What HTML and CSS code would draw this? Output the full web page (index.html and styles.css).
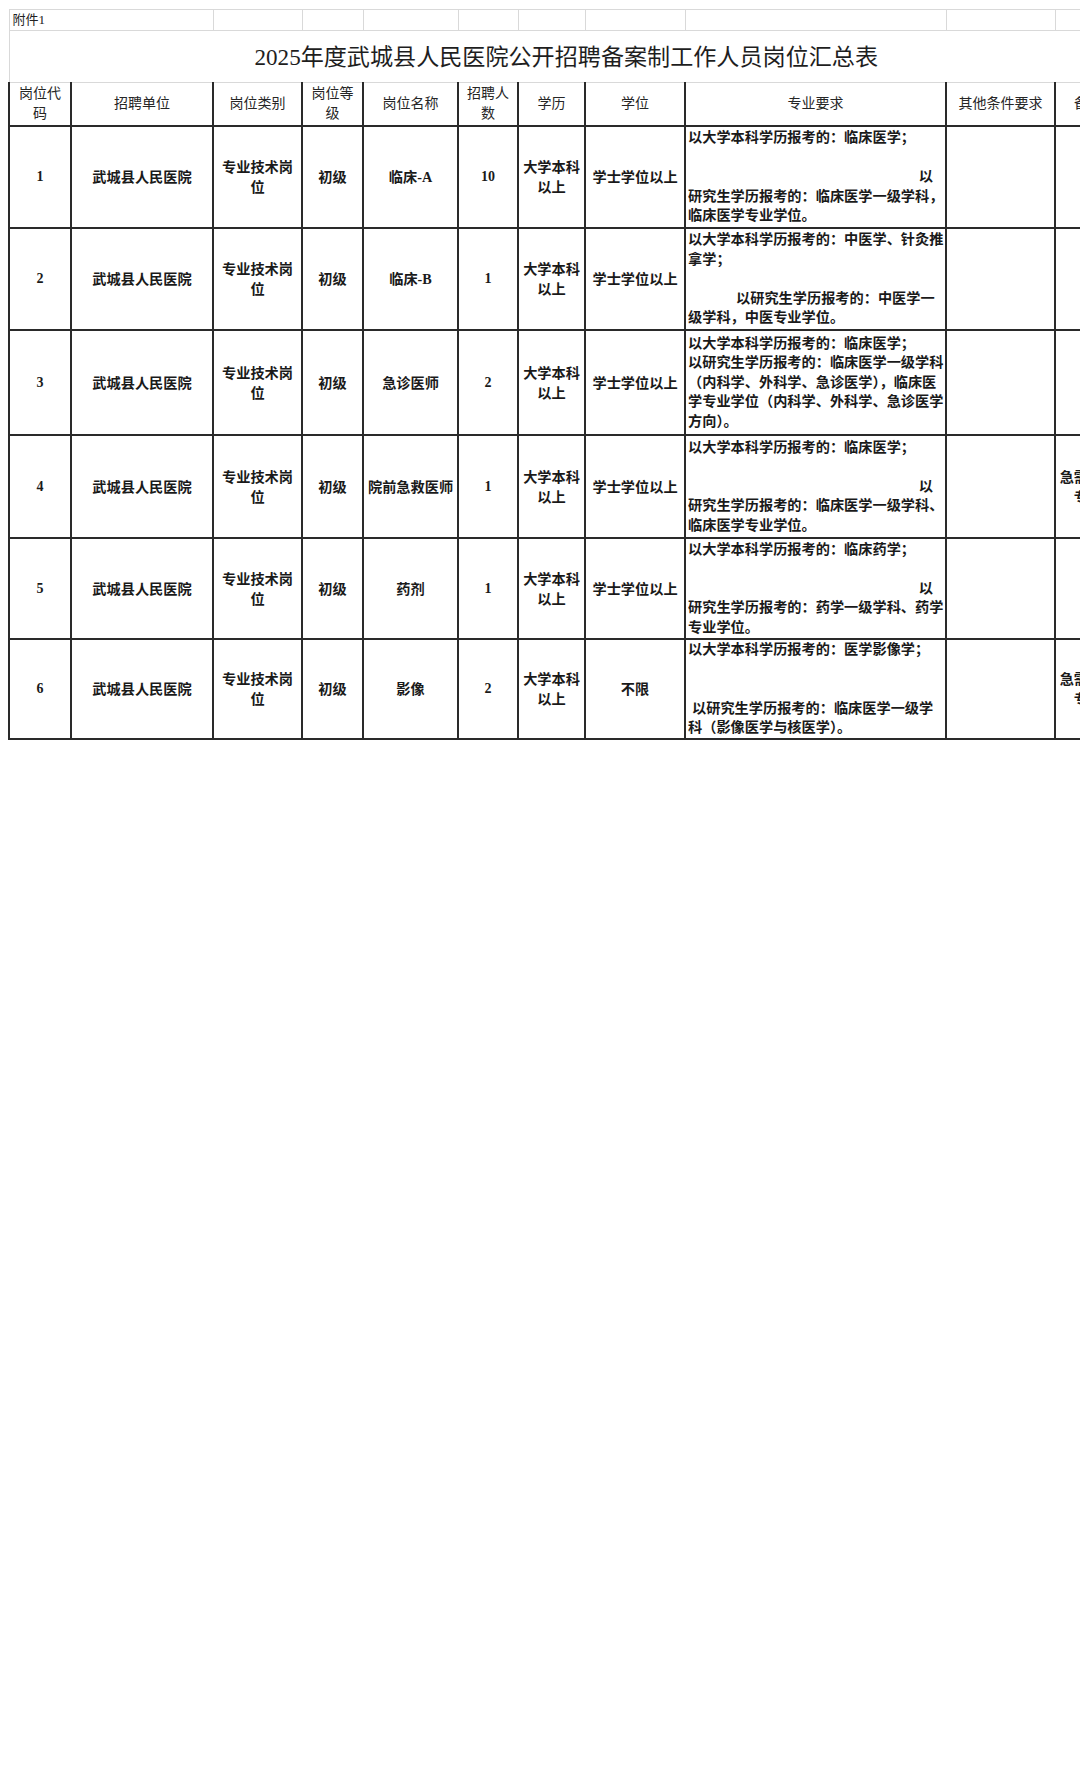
FILE: index.html
```html
<!DOCTYPE html>
<html lang="zh-CN">
<head>
<meta charset="utf-8">
<title>2025年度武城县人民医院公开招聘备案制工作人员岗位汇总表</title>
<link rel="stylesheet" href="styles.css">
</head>
<body>
<table class="sheet">
  <colgroup>
    <col class="c1"><col class="c2"><col class="c3"><col class="c4"><col class="c5"><col class="c6"><col class="c7"><col class="c8"><col class="c9"><col class="c10"><col class="c11">
  </colgroup>
  <tr class="r-note">
    <td colspan="2" class="note">附件1</td>
    <td></td><td></td><td></td><td></td><td></td><td></td><td></td><td></td><td></td>
  </tr>
  <tr class="r-title">
    <td colspan="11" class="title">2025年度武城县人民医院公开招聘备案制工作人员岗位汇总表</td>
  </tr>
  <tr class="r-head">
    <th>岗位代<br>码</th>
    <th>招聘单位</th>
    <th>岗位类别</th>
    <th>岗位等<br>级</th>
    <th>岗位名称</th>
    <th>招聘人<br>数</th>
    <th>学历</th>
    <th>学位</th>
    <th>专业要求</th>
    <th>其他条件要求</th>
    <th>备注</th>
  </tr>
  <tr class="r1">
    <td class="num">1</td>
    <td>武城县人民医院</td>
    <td>专业技术岗<br>位</td>
    <td>初级</td>
    <td>临床-A</td>
    <td class="num">10</td>
    <td>大学本科<br>以上</td>
    <td>学士学位以上</td>
    <td class="req"><div>以大学本科学历报考的：临床医学；</div><div>&nbsp;</div><div class="right">以</div><div>研究生学历报考的：临床医学一级学科，</div><div>临床医学专业学位。</div></td>
    <td></td>
    <td></td>
  </tr>
  <tr class="r2">
    <td class="num">2</td>
    <td>武城县人民医院</td>
    <td>专业技术岗<br>位</td>
    <td>初级</td>
    <td>临床-B</td>
    <td class="num">1</td>
    <td>大学本科<br>以上</td>
    <td>学士学位以上</td>
    <td class="req"><div>以大学本科学历报考的：中医学、针灸推</div><div>拿学；</div><div>&nbsp;</div><div class="indent">以研究生学历报考的：中医学一</div><div>级学科，中医专业学位。</div></td>
    <td></td>
    <td></td>
  </tr>
  <tr class="r3">
    <td class="num">3</td>
    <td>武城县人民医院</td>
    <td>专业技术岗<br>位</td>
    <td>初级</td>
    <td>急诊医师</td>
    <td class="num">2</td>
    <td>大学本科<br>以上</td>
    <td>学士学位以上</td>
    <td class="req"><div>以大学本科学历报考的：临床医学；</div><div>以研究生学历报考的：临床医学一级学科</div><div>（内科学、外科学、急诊医学），临床医</div><div>学专业学位（内科学、外科学、急诊医学</div><div>方向）。</div></td>
    <td></td>
    <td></td>
  </tr>
  <tr class="r4">
    <td class="num">4</td>
    <td>武城县人民医院</td>
    <td>专业技术岗<br>位</td>
    <td>初级</td>
    <td>院前急救医师</td>
    <td class="num">1</td>
    <td>大学本科<br>以上</td>
    <td>学士学位以上</td>
    <td class="req"><div>以大学本科学历报考的：临床医学；</div><div>&nbsp;</div><div class="right">以</div><div>研究生学历报考的：临床医学一级学科、</div><div>临床医学专业学位。</div></td>
    <td></td>
    <td>急需紧缺<br>专业</td>
  </tr>
  <tr class="r5">
    <td class="num">5</td>
    <td>武城县人民医院</td>
    <td>专业技术岗<br>位</td>
    <td>初级</td>
    <td>药剂</td>
    <td class="num">1</td>
    <td>大学本科<br>以上</td>
    <td>学士学位以上</td>
    <td class="req"><div>以大学本科学历报考的：临床药学；</div><div>&nbsp;</div><div class="right">以</div><div>研究生学历报考的：药学一级学科、药学</div><div>专业学位。</div></td>
    <td></td>
    <td></td>
  </tr>
  <tr class="r6">
    <td class="num">6</td>
    <td>武城县人民医院</td>
    <td>专业技术岗<br>位</td>
    <td>初级</td>
    <td>影像</td>
    <td class="num">2</td>
    <td>大学本科<br>以上</td>
    <td>不限</td>
    <td class="req"><div>以大学本科学历报考的：医学影像学；</div><div>&nbsp;</div><div>&nbsp;</div><div class="lead">以研究生学历报考的：临床医学一级学</div><div>科（影像医学与核医学）。</div></td>
    <td></td>
    <td>急需紧缺<br>专业</td>
  </tr>
</table>
</body>
</html>
```

FILE: styles.css
```css
html, body {
  overflow: hidden;
  background: #ffffff;
}
body {
  margin: 9px 0 0 8px;
  font-family: "Liberation Serif", "Noto Sans CJK SC", serif;
  color: #141414;
}
.sheet {
  border-collapse: collapse;
  table-layout: fixed;
  width: 1112px;
}
.c1 { width: 62px; }
.c2 { width: 142px; }
.c3 { width: 89px; }
.c4 { width: 61px; }
.c5 { width: 95px; }
.c6 { width: 60px; }
.c7 { width: 67px; }
.c8 { width: 100px; }
.c9 { width: 261px; }
.c10 { width: 109px; }
.c11 { width: 66px; }

.sheet td, .sheet th {
  padding: 0;
  text-align: center;
  vertical-align: middle;
  font-size: 14.2px;
  line-height: 20px;
  overflow: hidden;
}

.r-note td {
  height: 20px;
  border: 1px solid #d9d9d9;
}
.r-note .note {
  text-align: left;
  font-size: 13px;
  line-height: 18px;
  padding-left: 3px;
  color: #222;
}
.r-title .title {
  height: 51px;
  border: 1px solid #d9d9d9;
  border-right: none;
  font-size: 23.1px;
  line-height: 30px;
  padding-left: 2px;
  color: #1e1e1e;
  font-weight: normal;
  white-space: nowrap;
}

.r-head th {
  height: 42px;
  font-size: 14px;
  font-weight: normal;
  color: #262626;
  border: 2px solid #2a2a2a;
  border-top: 1px solid #d9d9d9;
}

.r1 td, .r2 td, .r3 td, .r4 td, .r5 td, .r6 td {
  border: 2px solid #2a2a2a;
  font-weight: bold;
  color: #1a1a1a;
}
.r1 td, .r2 td { height: 100px; }
.r3 td { height: 103px; }
.r4 td { height: 101px; }
.r5 td { height: 99px; }
.r6 td { height: 97px; }

.sheet td.num {
  font-size: 14px;
  font-weight: bold;
}

.sheet td.req {
  text-align: left;
  padding-left: 2px;
  white-space: nowrap;
  line-height: 19.5px;
  font-size: 14.2px;
}
.req .right {
  text-align: right;
  padding-right: 12px;
}
.req .indent {
  padding-left: 48px;
}
.req .lead {
  padding-left: 4px;
}
```
